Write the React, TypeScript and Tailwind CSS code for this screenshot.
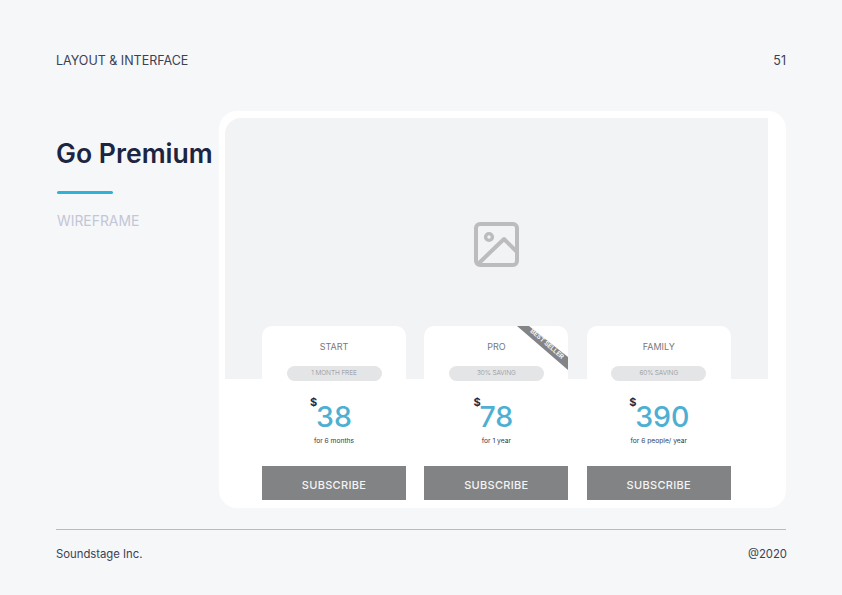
const plans = [
  { name: 'START', badge: '1 MONTH FREE', price: '38', note: 'for 6 months', priceClass: '' },
  { name: 'PRO', badge: '30% SAVING', price: '78', note: 'for 1 year', priceClass: '', ribbon: true },
  { name: 'FAMILY', badge: '60% SAVING', price: '390', note: 'for 6 people/ year', priceClass: 'ml-[7px]' },
];

function ImageIcon() {
  return (
    <svg width="46" height="46" viewBox="0 0 46 46" fill="none" stroke="#bcbcbe" strokeWidth="4" strokeLinejoin="round">
      <rect x="2" y="2" width="41" height="41" rx="4" />
      <circle cx="15" cy="15" r="3.4" strokeWidth="3.4" />
      <path d="M4 42 L30 17 L43 30" />
    </svg>
  );
}

function PlanCard({ plan }: { plan: (typeof plans)[number] }) {
  return (
    <div className="relative flex h-[174px] w-[144px] flex-col items-center overflow-hidden rounded-t-[10px] bg-white">
      {plan.ribbon && (
        <div className="absolute right-0 top-0 h-[44px] w-[51px]">
          <svg className="absolute inset-0" width="51" height="44" viewBox="0 0 51 44">
            <polygon points="0,0 12,0 51,31 51,44" fill="#838485" />
          </svg>
          <span className="absolute left-[5px] top-[14px] w-[50px] rotate-[41deg] whitespace-nowrap text-center text-[6.5px] font-bold leading-[8px] text-[#f2f2f2]">
            BEST SELLER
          </span>
        </div>
      )}
      <div className="mt-[15px] text-[9px] leading-[12px] text-[#77787a]">{plan.name}</div>
      <div className="mt-[13px] flex h-[15px] w-[95px] items-center justify-center rounded-full bg-[#e4e5e7] text-[6.5px] font-light tracking-[-0.1px] text-[#8f9092]">
        {plan.badge}
      </div>
      <div className={`relative mt-[18px] flex h-[36px] items-center text-[28.5px] font-medium leading-[36px] text-[#4eafd2] ${plan.priceClass}`}>
        <span className="absolute left-[-6px] top-[-3px] text-[11px] font-bold leading-[12px] text-[#1e2640]">$</span>
        {plan.price}
      </div>
      <div className="mt-[1px] text-[6.7px] leading-[10px] text-[#33394d]">{plan.note}</div>
      <div className="mt-auto flex h-[34px] w-full items-center justify-center bg-[#828384] pt-[4px] text-[11px] font-medium tracking-[0.3px] text-[#f4f4f4]">
        SUBSCRIBE
      </div>
    </div>
  );
}

export default function App() {
  return (
    <div className="flex h-[595px] w-[842px] flex-col bg-[#f6f7f9] px-[56px] font-['Inter',sans-serif]">
      <header className="flex justify-between pt-[53px] text-[12.5px] leading-[16px] text-[#3b4154]">
        <span>LAYOUT &amp; INTERFACE</span>
        <span>51</span>
      </header>

      <main className="mt-[42px] flex h-[397px]">
        <aside className="w-[163px] shrink-0">
          <h1 className="mt-[24px] whitespace-nowrap text-[26.6px] font-semibold leading-[36px] text-[#1c2541]">Go Premium</h1>
          <div className="ml-[1px] mt-[20px] h-[3px] w-[56px] rounded-full bg-[#2eb3d6]" />
          <div className="ml-[1px] mt-[18px] text-[13.9px] leading-[18px] text-[#c3c6d6]">WIREFRAME</div>
        </aside>

        <section className="w-[567px] rounded-[18px] bg-white pl-[6px] pr-[18px] pt-[7px]">
          <div className="flex h-[261px] items-center justify-center rounded-tl-[16px] bg-[#f2f3f5] pb-[8px]">
            <ImageIcon />
          </div>
          <div className="-mt-[53px] ml-[37px] flex gap-[18.4px]">
            {plans.map(plan => (
              <PlanCard key={plan.name} plan={plan} />
            ))}
          </div>
        </section>
      </main>

      <footer className="mt-[21px] flex justify-between border-t border-[#b9bbbd] pt-[17px] text-[11.3px] leading-[15px] text-[#3b4154]">
        <span>Soundstage Inc.</span>
        <span className="translate-x-[1px]">@2020</span>
      </footer>
    </div>
  );
}
